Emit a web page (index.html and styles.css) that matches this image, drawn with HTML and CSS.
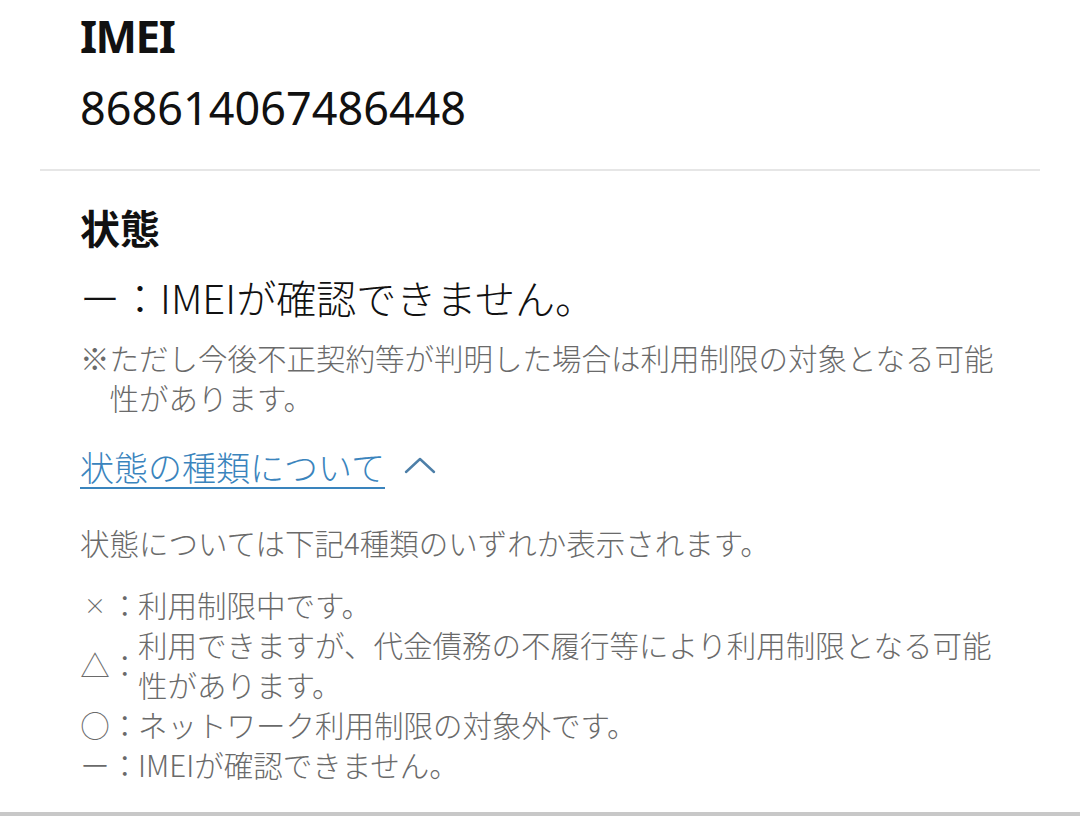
FILE: index.html
```html
<!DOCTYPE html>
<html lang="ja">

<head>
  <meta charset="utf-8">
  <meta name="viewport" content="width=device-width">
  <title>IMEI 状態</title>
  <link rel="stylesheet" href="styles.css">
</head>

<body>
  <div class="page">
    <!-- IMEI -->
    <section class="field">
      <h2 class="field-label latin">IMEI</h2>
      <p class="field-value">868614067486448</p>
    </section>

    <hr class="divider">

    <!-- 状態 -->
    <section class="field">
      <h2 class="field-label">状態</h2>
      <p class="status">ー：IMEIが確認できません。</p>
      <p class="note">※ただし今後不正契約等が判明した場合は利用制限の対象となる可能性があります。</p>

      <a class="toggle" href="#">
        <span class="toggle-text">状態の種類について</span>
        <svg class="chevron" width="34" height="20" viewBox="0 0 34 20">
          <polyline points="3,17 17,4 31,17" fill="none" stroke="#4d7fa8" stroke-width="2.4" stroke-linecap="round" stroke-linejoin="round" />
        </svg>
      </a>

      <p class="desc">状態については下記4種類のいずれか表示されます。</p>

      <ul class="legend">
        <li><span class="mark"><span class="sym small">×</span><span class="colon">：</span></span><span class="legend-text">利用制限中です。</span></li>
        <li><span class="mark"><span class="sym">△</span><span class="colon">：</span></span><span class="legend-text">利用できますが、代金債務の不履行等により利用制限となる可能性があります。</span></li>
        <li><span class="mark"><span class="sym">○</span><span class="colon">：</span></span><span class="legend-text">ネットワーク利用制限の対象外です。</span></li>
        <li><span class="mark"><span class="sym">ー</span><span class="colon">：</span></span><span class="legend-text">IMEIが確認できません。</span></li>
      </ul>
    </section>
  </div>
  <div class="bottom-rule"></div>
</body>

</html>
```

FILE: styles.css
```css
/* Reset default styles */
body,
h2,
p,
ul {
  margin: 0;
  padding: 0;
}

body {
  background-color: #ffffff;
  color: #111111;
  font-family: "Noto Sans CJK JP", "Noto Sans", sans-serif;
  height: 816px;
  display: flex;
  flex-direction: column;
}

.page {
  flex: 1;
  padding: 6px 40px 0;
}

.field {
  padding: 0 35px 0 40px;
}

/* Labels and values */
.field-label {
  font-size: 40px;
  font-weight: bold;
  line-height: 56px;
}

.field-label.latin {
  font-family: "Noto Sans", sans-serif;
  font-size: 44px;
  letter-spacing: -1.5px;
  padding-top: 2px;
}

.field-value {
  font-family: "Noto Sans", sans-serif;
  font-size: 45px;
  line-height: 56px;
  margin-top: 16px;
}

.divider {
  border: none;
  height: 2px;
  background-color: #e6e6e6;
  margin: 33px 0 28px;
}

.status {
  font-size: 40px;
  font-weight: 300;
  line-height: 56px;
  margin-top: 14px;
}

.note {
  font-size: 29.5px;
  font-weight: 300;
  line-height: 40px;
  color: #6a6a6a;
  padding-left: 1em;
  text-indent: -1em;
  margin-top: 12px;
}

/* Toggle link */
.toggle {
  display: inline-flex;
  align-items: center;
  gap: 18px;
  margin-top: 26px;
  text-decoration: none;
}

.toggle-text {
  font-size: 34px;
  font-weight: 300;
  line-height: 48px;
  color: #3a84bd;
  text-decoration: underline;
  text-decoration-thickness: 2px;
  text-underline-offset: 6px;
}

.chevron {
  display: block;
  margin-top: -4px;
}

.desc {
  font-size: 29.5px;
  font-weight: 300;
  line-height: 40px;
  color: #6a6a6a;
  margin-top: 31px;
}

/* Legend list */
.legend {
  list-style: none;
  margin-top: 22px;
  font-size: 29.5px;
  font-weight: 300;
  line-height: 40px;
  color: #6a6a6a;
}

.legend li {
  display: flex;
  align-items: center;
}

.mark {
  flex: none;
  width: 58px;
  display: flex;
}

.sym {
  width: 30px;
  text-align: center;
}

.sym.small {
  font-size: 22px;
}

.colon {
  width: 28px;
  text-align: center;
}

.legend-text {
  flex: 1;
}

.bottom-rule {
  height: 4px;
  background-color: #c8c8c8;
}
```
